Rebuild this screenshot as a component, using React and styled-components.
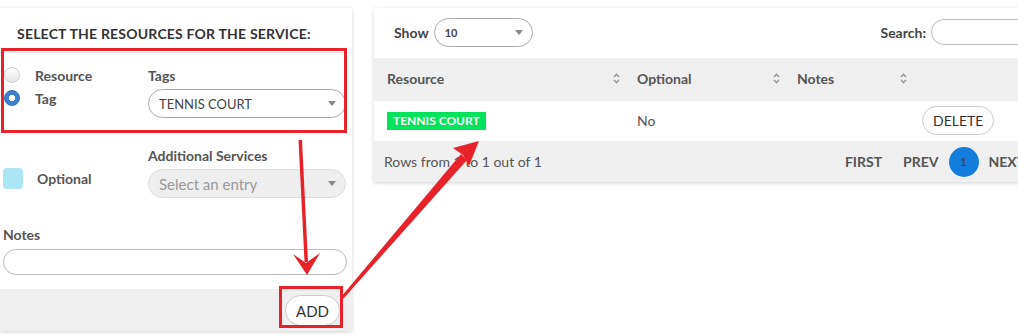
import React from 'react';
import styled, { createGlobalStyle } from 'styled-components';

const GlobalStyle = createGlobalStyle`
  html, body {
    margin: 0;
    padding: 0;
    background: #fff;
    overflow: hidden;
  }
  body {
    font-family: Lato, "Open Sans", sans-serif;
    color: #555;
  }
  #root {
    width: 1018px;
    height: 336px;
    overflow: hidden;
  }
`;

const Page = styled.div`
  position: relative;
  display: flex;
  align-items: flex-start;
  gap: 22px;
  padding-top: 8px;
  width: 1018px;
  height: 336px;
  box-sizing: border-box;
`;

const FormCard = styled.section`
  flex: 0 0 352px;
  background: #fff;
  box-shadow: 0 1px 4px rgba(0, 0, 0, 0.18);
`;

const FormBody = styled.div`
  padding: 0 5px 14px 3px;
`;

const Heading = styled.h2`
  margin: 0;
  padding: 17px 0 10px 17px;
  font-size: 14px;
  font-weight: 700;
  color: #333;
  letter-spacing: 0.2px;
  border-bottom: 1px solid #eee;
`;

const FieldRow = styled.div`
  display: grid;
  grid-template-columns: 145px 1fr;
  align-items: start;
  padding-top: ${p => p.$top || 0}px;
`;

const RadioList = styled.div`
  display: flex;
  flex-direction: column;
  gap: 7px;
`;

const RadioItem = styled.label`
  display: flex;
  align-items: center;
  gap: 15px;
  font-size: 14px;
  font-weight: 700;
  color: #555;
  height: 16px;
`;

const RadioDot = styled.span`
  box-sizing: border-box;
  width: 16px;
  height: 16px;
  border-radius: 50%;
  flex: 0 0 16px;
  margin-left: 1px;
  border: 1px solid ${p => (p.$on ? '#2f6eb5' : '#ccc')};
  background: ${p => (p.$on ? 'radial-gradient(circle, #fff 0 3px, #3a7fd0 3.5px)' : 'linear-gradient(#fff, #e6e6e6)')};
`;

const Field = styled.div`
  display: flex;
  flex-direction: column;
  gap: 5px;
`;

const Label = styled.div`
  font-size: 14px;
  font-weight: 700;
  color: #555;
  line-height: 17px;
`;

const Select = styled.div`
  box-sizing: border-box;
  height: 29px;
  display: flex;
  align-items: center;
  justify-content: space-between;
  padding: 0 9px 0 10px;
  border: 1px solid ${p => (p.$disabled ? '#ddd' : '#aaa')};
  border-radius: 15px;
  background: ${p => (p.$disabled ? '#eee' : '#fff')};
  color: ${p => (p.$disabled ? '#999' : '#444')};
  font-size: ${p => p.$size || 13}px;
  width: ${p => (p.$width ? `${p.$width}px` : 'auto')};
`;

const Caret = styled.span`
  width: 0;
  height: 0;
  border-left: 4px solid transparent;
  border-right: 4px solid transparent;
  border-top: 5px solid #888;
`;

const CheckRow = styled.div`
  display: flex;
  align-items: center;
  gap: 14px;
  padding-top: 21px;
  font-size: 14px;
  font-weight: 700;
  color: #555;
`;

const CheckBox = styled.span`
  width: 20px;
  height: 21px;
  border-radius: 4px;
  background: #ace5f4;
`;

const NotesField = styled(Field)`
  padding-top: 28px;
  gap: 6px;
`;

const TextInput = styled.div`
  box-sizing: border-box;
  height: 26px;
  border: 1px solid #bbb;
  border-radius: 13px;
  background: #fff;
  width: ${p => (p.$width ? `${p.$width}px` : 'auto')};
`;

const FormFooter = styled.div`
  display: flex;
  justify-content: flex-end;
  background: #efefef;
  padding: 6px 12px 5px;
`;

const PillButton = styled.button`
  font-family: inherit;
  font-size: ${p => p.$fs || 14}px;
  color: #333;
  background: #fff;
  border: 1px solid #ccc;
  border-radius: 16px;
  height: ${p => p.$h || 31}px;
  padding: 0 ${p => p.$px || 10}px;
  cursor: pointer;
`;

const TableCard = styled.section`
  flex: 0 0 730px;
  background: #fff;
  box-shadow: 0 1px 4px rgba(0, 0, 0, 0.18);
`;

const Toolbar = styled.div`
  height: 50px;
  display: flex;
  align-items: center;
  justify-content: space-between;
  padding: 0 20px;
  font-size: 14px;
  font-weight: 700;
  color: #444;
`;

const ToolGroup = styled.div`
  display: flex;
  align-items: center;
  gap: 5px;
  margin-top: -2px;
`;

const Row = styled.div`
  display: grid;
  grid-template-columns: 250px 160px 127px 1fr;
  align-items: center;
  height: ${p => p.$h}px;
  background: ${p => (p.$gray ? '#efefef' : '#fff')};
`;

const HeadCell = styled.div`
  display: flex;
  align-items: center;
  justify-content: space-between;
  padding: 0 4px 0 13px;
  font-size: 14px;
  font-weight: 700;
  color: #555;
  margin-top: -3px;
`;

const Cell = styled.div`
  padding: 0 13px;
  font-size: 14px;
  color: #555;
  margin-top: -2px;
`;

const Tag = styled.span`
  display: inline-block;
  background: #00e35b;
  color: #fff;
  font-size: 12px;
  font-weight: 700;
  padding: 2px 6px;
  line-height: 14px;
`;

const TableFooter = styled.div`
  height: 41px;
  display: flex;
  align-items: center;
  background: #efefef;
  padding-left: 10px;
  font-size: 14px;
  color: #555;
`;

const Pager = styled.div`
  margin-left: 303px;
  display: flex;
  align-items: center;
  gap: 21px;
  font-size: 14px;
  font-weight: 700;
  color: #555;
`;

const PageDot = styled.span`
  width: 30px;
  height: 30px;
  margin: 0 -11px;
  border-radius: 50%;
  background: #137ddb;
  display: flex;
  align-items: center;
  justify-content: center;
  font-size: 11px;
  color: #444;
`;

const Overlay = styled.svg`
  position: absolute;
  left: 0;
  top: 0;
  pointer-events: none;
`;

const SortIcon = () => (
  <svg width="7" height="11" viewBox="0 0 7 11">
    <path d="M1 4 L3.5 1.5 L6 4" fill="none" stroke="#999" strokeWidth="1.6" />
    <path d="M1 7 L3.5 9.5 L6 7" fill="none" stroke="#999" strokeWidth="1.6" />
  </svg>
);

const RED = '#e8222b';

const Annotations = () => (
  <Overlay width="1018" height="336" viewBox="0 0 1018 336">
    <rect x="2.5" y="49.5" width="343" height="82" fill="none" stroke={RED} strokeWidth="3" />
    <rect x="280.5" y="287.5" width="61" height="39" fill="none" stroke={RED} strokeWidth="3" />
    <polygon points="298.5,140 302,140 308,262 304.5,262" fill={RED} />
    <polygon points="307,275 293,254 306,263 320,253" fill={RED} />
    <polygon points="341,297 343,299 467,160 461,154" fill={RED} />
    <polygon points="479,141 453,148 463,155 469,166" fill={RED} />
  </Overlay>
);

export default function App() {
  return (
    <>
      <GlobalStyle />
      <Page>
        <FormCard>
          <Heading>SELECT THE RESOURCES FOR THE SERVICE:</Heading>
          <FormBody>
            <FieldRow $top={14}>
              <RadioList>
                <RadioItem><RadioDot />Resource</RadioItem>
                <RadioItem><RadioDot $on />Tag</RadioItem>
              </RadioList>
              <Field>
                <Label>Tags</Label>
                <Select $width={198}>TENNIS COURT<Caret /></Select>
              </Field>
            </FieldRow>
            <FieldRow $top={29}>
              <CheckRow><CheckBox />Optional</CheckRow>
              <Field>
                <Label>Additional Services</Label>
                <Select $width={198} $disabled $size={15}>Select an entry<Caret /></Select>
              </Field>
            </FieldRow>
            <NotesField>
              <Label>Notes</Label>
              <TextInput $width={344} />
            </NotesField>
          </FormBody>
          <FormFooter>
            <PillButton $fs={15}>ADD</PillButton>
          </FormFooter>
        </FormCard>

        <TableCard>
          <Toolbar>
            <ToolGroup>
              Show
              <Select $width={99} $size={11}>10<Caret /></Select>
            </ToolGroup>
            <ToolGroup>
              Search:
              <TextInput $width={153} />
            </ToolGroup>
          </Toolbar>
          <Row $gray $h={43}>
            <HeadCell>Resource<SortIcon /></HeadCell>
            <HeadCell>Optional<SortIcon /></HeadCell>
            <HeadCell>Notes<SortIcon /></HeadCell>
            <HeadCell />
          </Row>
          <Row $h={40}>
            <Cell><Tag>TENNIS COURT</Tag></Cell>
            <Cell>No</Cell>
            <Cell />
            <Cell style={{ paddingLeft: 11 }}>
              <PillButton $h={29} $px={10}>DELETE</PillButton>
            </Cell>
          </Row>
          <TableFooter>
            Rows from 1 to 1 out of 1
            <Pager>
              <span>FIRST</span>
              <span>PREV</span>
              <PageDot>1</PageDot>
              <span>NEXT</span>
            </Pager>
          </TableFooter>
        </TableCard>
        <Annotations />
      </Page>
    </>
  );
}
